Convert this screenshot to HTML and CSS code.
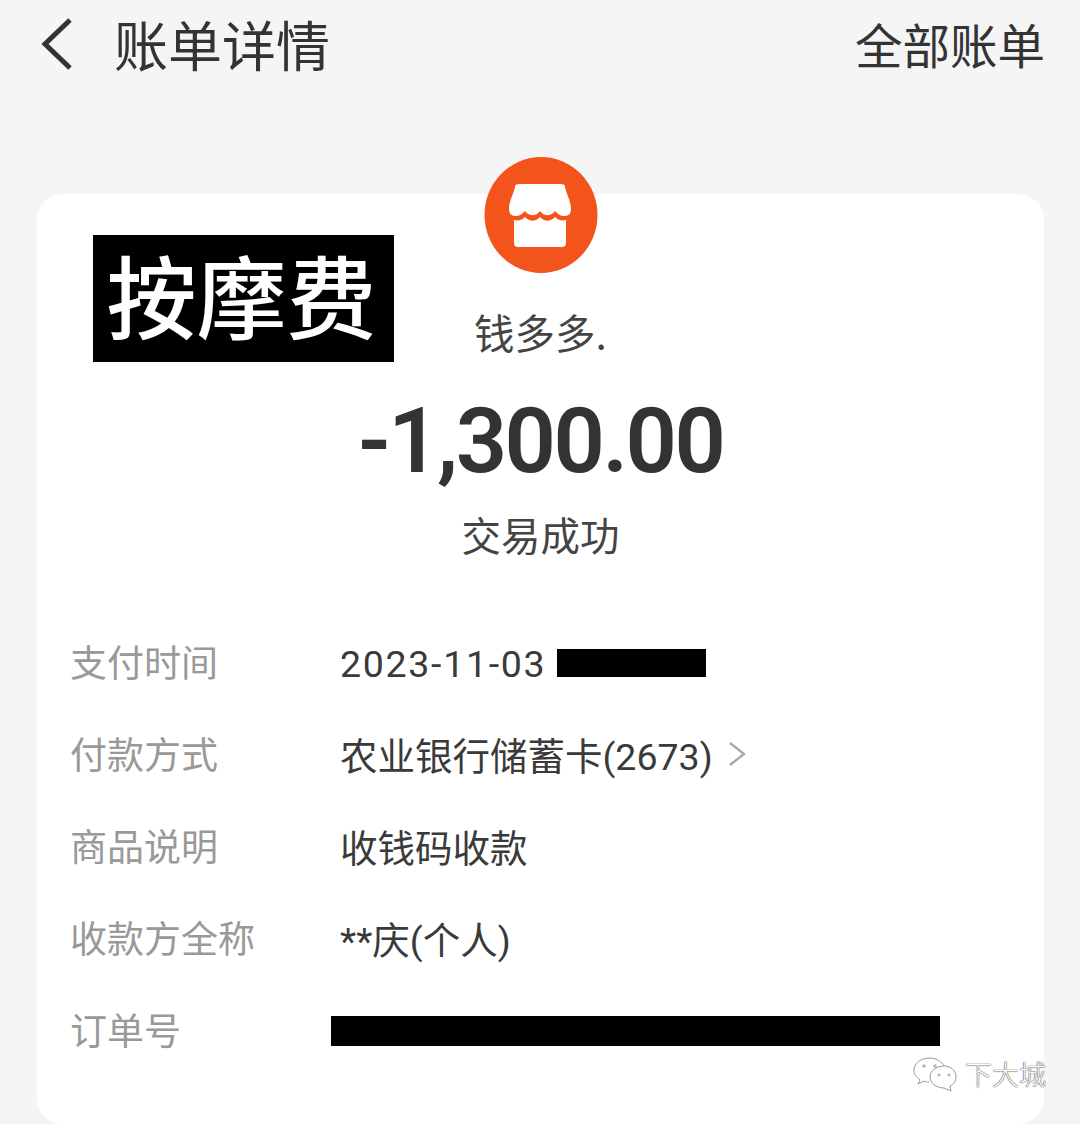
FILE: index.html
```html
<!DOCTYPE html>
<html lang="zh-CN">
<head>
<meta charset="utf-8">
<title>账单详情</title>
<link rel="stylesheet" href="styles.css">
</head>
<body>
<div class="page">
  <header class="topbar">
    <div class="topbar-left">
      <svg class="back" viewBox="0 0 34 54" aria-hidden="true"><path d="M30 3 L5 27 L30 51"/></svg>
      <h1 class="title">账单详情</h1>
    </div>
    <span class="all-bills">全部账单</span>
  </header>
  <main class="card">
    <div class="sticker">按摩费</div>
    <section class="summary">
      <svg class="shop" viewBox="0 0 114 116" aria-hidden="true">
        <ellipse cx="57" cy="58" rx="56.5" ry="58" fill="#f2541b"/>
        <path fill="#fff" d="M31 30 Q31 27 35 27 H77 Q81 27 81 30 C82 36 87 44 87 52 Q87 59 81 59 C76 59 74 57 71 54 C68 59 60 60 56 54 C52 60 44 59 41 54 C38 57 36 59 31 59 Q25 59 25 52 C25 44 30 36 31 30 Z"/>
        <path fill="#fff" d="M30 63 C35 64 38 63 41 60 C46 65 51 65 56 60 C61 65 66 65 71 60 C74 63 77 64 82 63 V86 Q82 90 78 90 H34 Q30 90 30 86 Z"/>
      </svg>
      <div class="merchant">钱多多.</div>
      <div class="amount">-1,300.00</div>
      <div class="status">交易成功</div>
    </section>
    <dl class="details">
      <div class="row">
        <dt>支付时间</dt>
        <dd><span class="date">2023-11-03</span><span class="redact redact-time"></span></dd>
      </div>
      <div class="row">
        <dt>付款方式</dt>
        <dd>农业银行储蓄卡(2673)<svg class="chev" viewBox="0 0 20 28" aria-hidden="true"><path d="M3 3 L17 14 L3 25"/></svg></dd>
      </div>
      <div class="row">
        <dt>商品说明</dt>
        <dd>收钱码收款</dd>
      </div>
      <div class="row">
        <dt>收款方全称</dt>
        <dd>**庆(个人)</dd>
      </div>
      <div class="row">
        <dt>订单号</dt>
        <dd><span class="redact redact-order"></span></dd>
      </div>
    </dl>
  </main>
  <div class="watermark">
    <svg class="wx" viewBox="0 0 46 36" aria-hidden="true">
      <path d="M18 2 C9 2 2 7 2 14 C2 18 4 21 8 24 L6 28 L12 25 C14 26 15 26 17 26"/>
      <path d="M32 10 C24 10 18 15 18 21 C18 27 24 32 32 32 L39 35 L38 30 C42 28 44 25 44 21 C44 15 39 10 32 10 Z"/>
      <path d="M18 2 C25 2 30 6 32 10"/>
      <circle cx="12" cy="10" r="1.2"/><circle cx="23" cy="10" r="1.2"/>
      <circle cx="27" cy="19" r="1"/><circle cx="37" cy="19" r="1"/>
    </svg>
    <span class="wm-text">下大城</span>
  </div>
</div>
</body>
</html>
```
FILE: styles.css
```css
* { box-sizing: border-box; }
html, body { margin: 0; padding: 0; }
body {
  background: #f5f5f5;
  font-family: "Noto Sans CJK SC", "Noto Sans", sans-serif;
  color: #333;
}
.page {
  position: relative;
  width: 1080px;
  height: 1124px;
  overflow: hidden;
  padding: 0 35px 0 37px;
}
.topbar {
  display: flex;
  justify-content: space-between;
  align-items: center;
  height: 88px;
}
.topbar-left {
  display: flex;
  align-items: center;
  gap: 40px;
}
.back {
  width: 34px;
  height: 54px;
  margin-left: 3px;
  flex: none;
}
.back path {
  fill: none;
  stroke: #333;
  stroke-width: 5;
}
.title {
  margin: 0;
  font-size: 54px;
  font-weight: 400;
  line-height: 1;
  color: #333;
}
.all-bills {
  font-size: 47.5px;
  line-height: 1;
  color: #333;
}
.card {
  position: relative;
  margin-top: 106px;
  width: 1007px;
  height: 930px;
  background: #fff;
  border-radius: 26px;
}
.sticker {
  position: absolute;
  left: 56px;
  top: 41px;
  width: 301px;
  height: 127px;
  padding-right: 4px;
  background: #000;
  color: #fff;
  font-size: 90px;
  font-weight: 500;
  line-height: 116px;
  text-align: center;
}
.summary {
  display: flex;
  flex-direction: column;
  align-items: center;
}
.shop {
  display: block;
  width: 114px;
  height: 116px;
  margin-top: -37px;
}
.merchant {
  margin-top: 31px;
  font-size: 40.5px;
  line-height: 56px;
  color: #444;
}
.amount {
  margin-top: 31px;
  font-family: Roboto, sans-serif;
  font-weight: 600;
  font-size: 90px;
  letter-spacing: -2.5px;
  line-height: 102px;
  color: #333;
}
.status {
  margin-top: 13px;
  font-size: 39.5px;
  line-height: 56px;
  color: #444;
}
.details {
  margin: 73px 0 0;
  padding: 0 33px;
  display: flex;
  flex-direction: column;
  gap: 40px;
}
.row {
  display: flex;
  align-items: center;
  height: 52px;
}
.row dt {
  width: 270px;
  font-size: 37px;
  color: #999;
}
.row dd {
  margin: 0;
  display: flex;
  align-items: center;
  font-family: Roboto, "Noto Sans CJK SC", sans-serif;
  font-size: 37.5px;
  color: #3a3a3a;
  white-space: pre;
}
.date {
  margin-top: 6px;
  letter-spacing: 1.7px;
}
.redact {
  display: block;
  background: #000;
}
.redact-time {
  width: 149px;
  height: 28px;
  margin-left: 11px;
  margin-top: 4px;
}
.redact-order {
  width: 609px;
  height: 30px;
  margin-left: -9px;
  margin-top: 4px;
}
.chev {
  width: 20px;
  height: 28px;
  margin-left: 14px;
  margin-top: 1px;
}
.chev path {
  fill: none;
  stroke: #aaa;
  stroke-width: 2.5;
}
.watermark {
  position: absolute;
  left: 912px;
  top: 1056px;
  display: flex;
  align-items: center;
  gap: 7px;
}
.wx {
  width: 46px;
  height: 36px;
}
.wx path, .wx circle {
  fill: #fff;
  stroke: #999;
  stroke-width: 1;
}
.wm-text {
  font-size: 27px;
  line-height: 36px;
  font-weight: 300;
  color: #fff;
  text-shadow: 0 0 1px #333, 0 0 1px #333;
}
```
